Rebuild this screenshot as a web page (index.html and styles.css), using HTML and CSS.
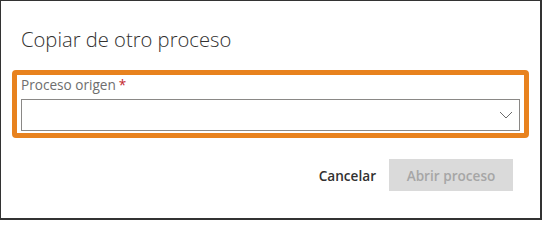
FILE: index.html
```html
<!DOCTYPE html>
<html lang="es">
<head>
<meta charset="utf-8">
<title>Copiar de otro proceso</title>
<link rel="stylesheet" href="styles.css">
</head>
<body>
<div class="frame">
  <h1 class="title">Copiar de otro proceso</h1>
  <div class="highlight">
    <label class="label">Proceso origen<span class="req">*</span></label>
    <div class="select">
      <svg class="chev" width="14" height="8" viewBox="0 0 14 8"><path d="M1 1 L7 7 L13 1" fill="none" stroke="#6b6b6b" stroke-width="1"/></svg>
    </div>
  </div>
  <div class="actions">
    <button class="btn cancel">Cancelar</button>
    <button class="btn primary" disabled>Abrir proceso</button>
  </div>
</div>
</body>
</html>
```
FILE: styles.css
```css
html, body {
  margin: 0;
  padding: 0;
  background: #ffffff;
}
.frame {
  box-sizing: border-box;
  width: 542px;
  height: 220px;
  border-style: solid;
  border-color: #333333;
  border-width: 1px 2px 2px 1px;
  padding: 24px 11px 0 11px;
  font-family: "Open Sans", "Noto Sans", sans-serif;
  background: #ffffff;
}
.title {
  margin: 0 0 17px 9px;
  font-size: 20.2px;
  line-height: 28px;
  font-weight: 300;
  color: #323130;
}
.highlight {
  border: 5px solid #e8821e;
  border-radius: 4px;
  padding: 0 4px 2px 4px;
}
.label {
  display: block;
  font-size: 13.6px;
  line-height: 20px;
  color: #6e6e6e;
  margin-bottom: 4px;
}
.req {
  color: #c4262e;
  margin-left: 3px;
}
.select {
  box-sizing: border-box;
  height: 32px;
  border: 1px solid #8a8886;
  display: flex;
  align-items: center;
  justify-content: flex-end;
  padding-right: 6px;
}
.chev {
  display: block;
}
.actions {
  display: flex;
  justify-content: flex-end;
  align-items: center;
  margin-top: 21px;
  margin-right: 16px;
  gap: 13px;
}
.btn {
  font-family: "Open Sans", "Noto Sans", sans-serif;
  font-size: 13.6px;
  font-weight: 600;
  height: 32px;
  border: none;
  padding: 0;
  background: transparent;
}
.cancel {
  color: #323130;
}
.primary {
  width: 124px;
  background: #dadada;
  color: #a6a6a6;
}
```
